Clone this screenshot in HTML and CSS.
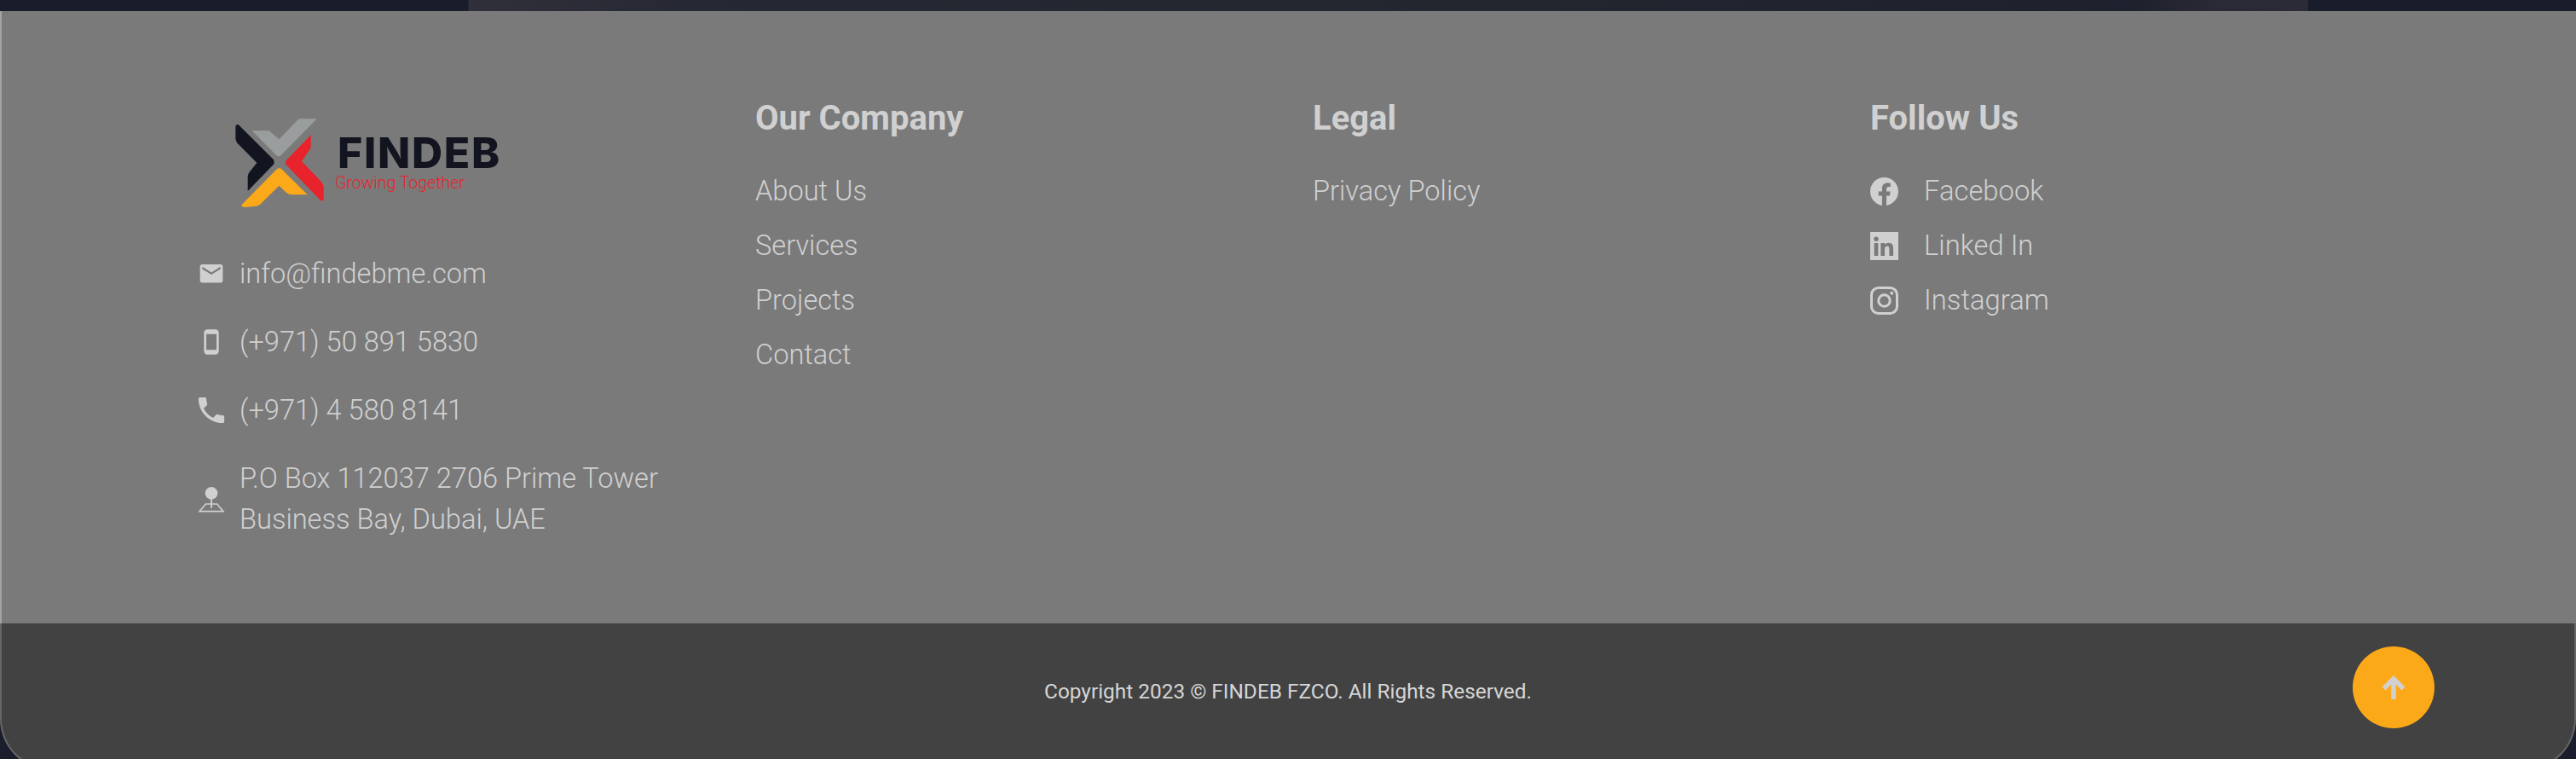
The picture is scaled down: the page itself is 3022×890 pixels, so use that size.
FILE: index.html
```html
<!DOCTYPE html>
<html lang="en">
<head>
  <meta charset="UTF-8" />
  <title>Findeb - Footer</title>
  <link rel="stylesheet" href="styles.css">
</head>
<body>

<div class="top-strip"></div>

<footer class="footer">
  <div class="footer-main">
    <div class="col col-contact">
      <div class="logo">
        <svg class="logo-mark" viewBox="0 0 420 360" aria-hidden="true">
          <path fill="#12151f" d="M52 55q3-10 12-5L186 172q4 8 0 16L95 282V232q0-10 6-17l26-32L58 113q-6-7-6-16z"/>
          <path fill="#9a9d9e" d="M110 70H170L205 100 275 28H338L210 158q-8 5-15-2z"/>
          <path fill="#e8232b" d="M317 85V130L285 178 350 245q12 13 12 26V310q-2 10-10 6L230 190q-4-8 0-15z"/>
          <path fill="#fca919" d="M198 204q7-4 15 0L305 295H250q-10 0-18-6L205 263 140 328q-6 6-15 7L85 339q-12 0-12-8z"/>
        </svg>
        <div class="logo-text">
          <div class="logo-name">FINDEB</div>
          <div class="logo-tag">Growing Together</div>
        </div>
      </div>
      <div class="contact-row">
        <svg class="contact-icon" viewBox="0 0 24 24"><path d="M4 4h16a2 2 0 0 1 2 2v12a2 2 0 0 1-2 2H4a2 2 0 0 1-2-2V6a2 2 0 0 1 2-2zm8 9 8-5V6l-8 5-8-5v2z" transform="translate(0 -.2)"/></svg>
        <span>info@findebme.com</span>
      </div>
      <div class="contact-row">
        <svg class="contact-icon" viewBox="0 0 24 24"><path d="M8 1h8a3 3 0 0 1 2.500 2.500v17A3 3 0 0 1 16 23H8a3 3 0 0 1-2.500-2.500v-17A3 3 0 0 1 8 1zm-.5 4v14h9V5z"/></svg>
        <span>(+971) 50 891 5830</span>
      </div>
      <div class="contact-row">
        <svg class="contact-icon" viewBox="0 0 24 24"><path d="M6.600 10.800c1.440 2.830 3.760 5.140 6.590 6.590l2.200-2.200c.27-.27.67-.36 1.020-.24 1.120.37 2.330.57 3.570.57.550 0 1 .45 1 1V20c0 .550-.45 1-1 1C10.600 21 3 13.400 3 4c0-.550.45-1 1-1h3.500c.550 0 1 .45 1 1 0 1.250.2 2.450.57 3.570.11.350.03.74-.25 1.020z" transform="translate(12 12) scale(1.260) translate(-12 -12)"/></svg>
        <span>(+971) 4 580 8141</span>
      </div>
      <div class="contact-row">
        <svg class="contact-icon" viewBox="0 0 24 24"><circle cx="12" cy="7" r="5.500"/><path d="M11.300 11h1.400v9h-1.400z"/><path d="M7 16.500H17L22.500 23H1.500z" fill="none" stroke="#d0d0d0" stroke-width="1.200"/></svg>
        <span>P.O Box 112037 2706 Prime Tower<br>Business Bay, Dubai, UAE</span>
      </div>
    </div>

    <div class="col">
      <h3>Our Company</h3>
      <a href="#">About Us</a>
      <a href="#">Services</a>
      <a href="#">Projects</a>
      <a href="#">Contact</a>
    </div>

    <div class="col">
      <h3>Legal</h3>
      <a href="#">Privacy Policy</a>
    </div>

    <div class="col">
      <h3>Follow Us</h3>
      <a class="social" href="#">
        <svg class="social-icon" viewBox="0 0 24 24"><path d="M24 12.070C24 5.400 18.630 0 12 0S0 5.400 0 12.070C0 18.100 4.390 23.100 10.130 24v-8.440H7.080v-3.490h3.050V9.410c0-3.020 1.790-4.690 4.530-4.690 1.310 0 2.680.24 2.680.24v2.970h-1.510c-1.490 0-1.960.93-1.960 1.880v2.260h3.330l-.53 3.490h-2.800V24C19.610 23.100 24 18.100 24 12.070z"/></svg>
        Facebook
      </a>
      <a class="social" href="#">
        <svg class="social-icon" viewBox="0 0 24 24"><path fill-rule="evenodd" d="M0 0h24v24H0zM3.400 9.500v10.800h3.400V9.500zM5.100 4a2 2 0 1 0 0 4 2 2 0 0 0 0-4zM9 9.500v10.800h3.400v-5.400c0-1.500.3-2.800 2.100-2.800s1.800 1.600 1.800 2.900v5.300h3.400v-6c0-2.900-.7-5.100-4-5.100-1.600 0-2.800.9-3.300 1.700V9.500z"/></svg>
        Linked In
      </a>
      <a class="social" href="#">
        <svg class="social-icon" viewBox="0 0 24 24"><path fill-rule="evenodd" d="M7 0h10a7 7 0 0 1 7 7v10a7 7 0 0 1-7 7H7a7 7 0 0 1-7-7V7a7 7 0 0 1 7-7zm0 2.200A4.800 4.800 0 0 0 2.200 7v10A4.800 4.800 0 0 0 7 21.800h10a4.800 4.800 0 0 0 4.800-4.800V7A4.800 4.800 0 0 0 17 2.200zM12 6a6 6 0 1 1 0 12 6 6 0 0 1 0-12zm0 2.200a3.800 3.800 0 1 0 0 7.600 3.800 3.800 0 0 0 0-7.600zM18.400 4.200a1.400 1.400 0 1 1 0 2.800 1.400 1.400 0 0 1 0-2.800z"/></svg>
        Instagram
      </a>
    </div>
  </div>

  <div class="footer-bottom">
    <span>Copyright 2023 © FINDEB FZCO. All Rights Reserved.</span>
    <a class="to-top" href="#" aria-label="Back to top">
      <svg viewBox="0 0 28 28"><path d="M14 4V28M2.500 15.500 14 4 25.500 15.500" fill="none" stroke="#d0d0d0" stroke-width="5.500" stroke-linejoin="miter"/></svg>
    </a>
  </div>
</footer>

</body>
</html>
```

FILE: styles.css
```css
html, body {
  margin: 0; padding: 0;
  height: 100%;
  background: #1a1d2b;
  color: #d0d0d0;
  font-family: 'Roboto', sans-serif;
  overflow: hidden;
}

.top-strip {
  height: 13px;
  background: linear-gradient(90deg, #191c2a 0, #191c2a 549px, #2f303a 550px, #262833 800px, #23252f 1800px, #1e202d 2500px, #292a35 2600px, #2a2b36 2707px, #191c2a 2708px, #191c2a 100%);
}

.footer {
  height: 890px;
  display: flex;
  flex-direction: column;
}

.footer-main {
  height: 718px;
  flex-shrink: 0;
  background: #7a7a7a;
  display: flex;
  box-sizing: border-box;
  border-left: 2px solid #a3a3a3;
  padding: 0 0 0 230px;
}

.col {
  width: 654px;
  padding-top: 103px;
  display: flex;
  flex-direction: column;
  align-items: flex-start;
  box-sizing: border-box;
}

.col h3 {
  margin: 0 0 30px;
  font-size: 40px;
  line-height: 46px;
  font-weight: 700;
}

.col a {
  color: #d0d0d0;
  text-decoration: none;
  font-size: 32.600px;
  font-weight: 300;
  line-height: 64px;
}

.col-contact {
  padding-top: 0;
}

.logo {
  display: flex;
  align-items: center;
  margin: 117px 0 47px 27px;
}

.logo-mark {
  width: 140px;
  height: 120px;
  flex-shrink: 0;
}

.logo-text {
  margin-left: -3px;
  margin-top: -1px;
}

.logo-name {
  font-family: 'Inter', sans-serif;
  font-size: 50px;
  font-weight: 800;
  line-height: 50px;
  letter-spacing: 1.700px;
  color: #12151f;
}

.logo-tag {
  font-size: 19.500px;
  font-weight: 300;
  line-height: 22px;
  color: #e8232b;
  margin-left: -3px;
}

.contact-row {
  display: flex;
  align-items: center;
  gap: 17px;
  font-size: 32.600px;
  font-weight: 300;
  line-height: 48px;
  margin-bottom: 32px;
}

.contact-icon {
  width: 32px;
  height: 32px;
  fill: #d0d0d0;
  flex-shrink: 0;
}

.col a.social {
  display: flex;
  align-items: center;
  gap: 30px;
  font-size: 32.800px;
}

.social-icon {
  width: 33px;
  height: 33px;
  fill: #d0d0d0;
  flex-shrink: 0;
}

.footer-bottom {
  position: relative;
  flex: 1;
  background: #424242;
  display: flex;
  align-items: center;
  justify-content: center;
  box-sizing: border-box;
  border: 2px solid #666;
  border-top: 0;
  border-radius: 0 0 60px 60px;
  padding-bottom: 11px;
  font-size: 24.400px;
  font-weight: 400;
  color: #d6d6d6;
}

.to-top {
  position: absolute;
  left: 2758px;
  top: 27px;
  width: 96px;
  height: 96px;
  border-radius: 50%;
  background: #fca919;
  display: flex;
  align-items: center;
  justify-content: center;
}

.to-top svg {
  width: 28px;
  height: 28px;
}
```
